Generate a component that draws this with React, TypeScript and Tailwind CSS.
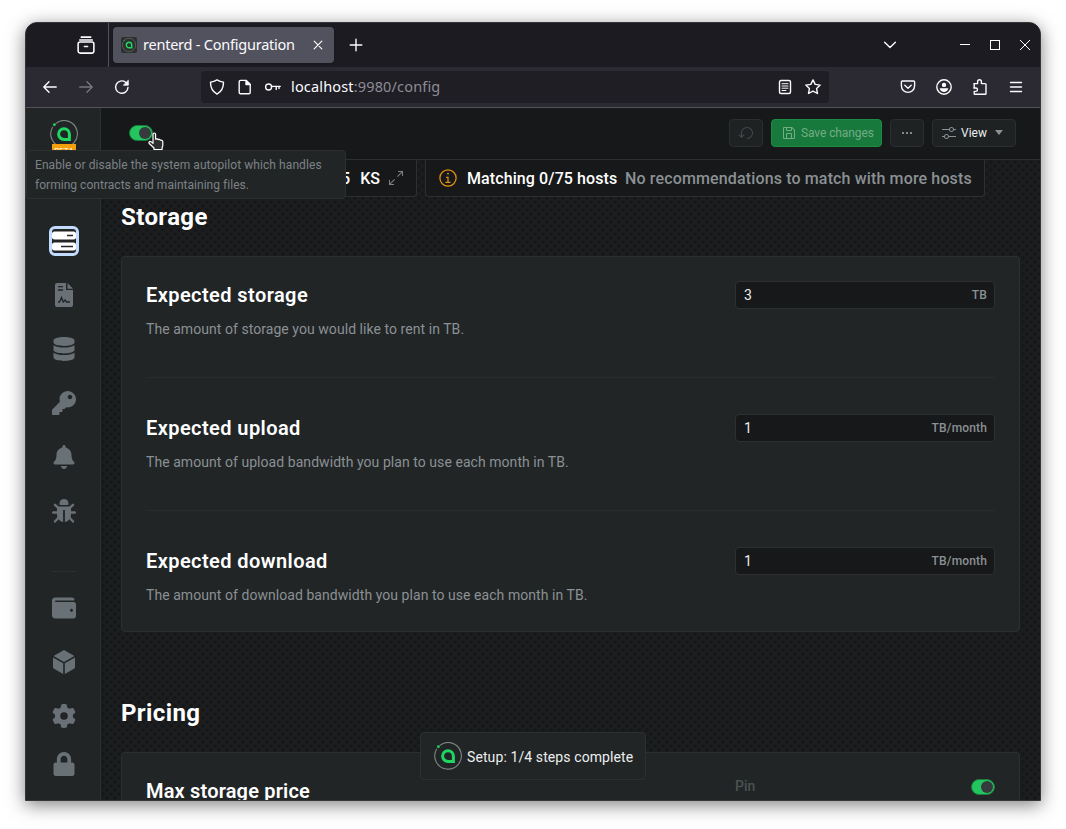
import React from "react";
import {
  FaDatabase,
  FaKey,
  FaBell,
  FaWallet,
  FaLock,
} from "react-icons/fa";
import { FaGear } from "react-icons/fa6";

const uiFont = "font-['Noto_Sans',sans-serif]";
const appFont = "font-[Roboto,sans-serif]";

function Logo({ className }: { className: string }) {
  return (
    <svg viewBox="0 0 28 28" className={className} fill="none">
      <path d="M5.6 3.6A13.3 13.3 0 1 1 2.8 6.8" stroke="#7c8580" strokeWidth="1.1" />
      <circle cx="4.4" cy="4.7" r="1.4" fill="#1ed660" />
      <path d="M14 8.7a5.4 5.4 0 1 0 0 10.8h5.4v-5.4A5.4 5.4 0 0 0 14 8.7Z" stroke="#1ed660" strokeWidth="3" />
    </svg>
  );
}

function Carbon({ d, className }: { d: string; className: string }) {
  return (
    <svg viewBox="0 0 32 32" className={className} fill="currentColor">
      <path d={d} />
    </svg>
  );
}

const SAVE =
  "M27.71,9.29l-5-5A1,1,0,0,0,22,4H6A2,2,0,0,0,4,6V26a2,2,0,0,0,2,2H26a2,2,0,0,0,2-2V10A1,1,0,0,0,27.71,9.29ZM12,6h8v4H12Zm8,20H12V18h8Zm2,0V18a2,2,0,0,0-2-2H12a2,2,0,0,0-2,2v8H6V6h4v4a2,2,0,0,0,2,2h8a2,2,0,0,0,2-2V6.41l4,4V26Z";
const RESET =
  "M18,28A12,12,0,1,0,6,16v6.2L2.4,18.6,1,20l6,6,6-6-1.4-1.4L8,22.2V16H8A10,10,0,1,1,18,26Z";
const ADJUST =
  "M30,8h-4.1c-0.5-2.3-2.5-4-4.9-4s-4.4,1.7-4.9,4H2v2h14.1c0.5,2.3,2.5,4,4.9,4s4.4-1.7,4.9-4H30V8z M21,12c-1.7,0-3-1.3-3-3s1.3-3,3-3s3,1.3,3,3S22.7,12,21,12z M2,24h4.1c0.5,2.3,2.5,4,4.9,4s4.4-1.7,4.9-4H30v-2H15.9c-0.5-2.3-2.5-4-4.9-4s-4.4,1.7-4.9,4H2V24z M11,20c1.7,0,3,1.3,3,3s-1.3,3-3,3s-3-1.3-3-3S9.3,20,11,20z";
const MAXIMIZE =
  "M20 2V4H26.586L18 12.582 19.414 14 28 5.414V12H30V2ZM14 19.416 12.592 18 4 26.586V20H2V30H12V28H5.414Z";
const INFO =
  "M17,22V14H13v2h2v6H12v2h8V22ZM16,7.5A1.5,1.5,0,1,0,17.5,9,1.5,1.5,0,0,0,16,7.5ZM16,30A14,14,0,1,1,30,16,14,14,0,0,1,16,30ZM16,4A12,12,0,1,0,28,16,12,12,0,0,0,16,4Z";

function Line({ children, className = "size-4" }: { children: React.ReactNode; className?: string }) {
  return (
    <svg
      viewBox="0 0 16 16"
      className={className}
      fill="none"
      stroke="currentColor"
      strokeWidth="1.4"
      strokeLinecap="round"
      strokeLinejoin="round"
    >
      {children}
    </svg>
  );
}

function TitleBar() {
  return (
    <div className="flex h-[44px] shrink-0 items-center bg-[#1c1b22] text-[#fbfbfe]">
      <div className="flex h-full w-[83px] items-center justify-end border-r border-[#52525e] pr-[13px]">
        <Line className="size-[18px]">
          <path d="M3.8 1h8.4M2.4 3.6h11.2" />
          <rect x="1" y="5.4" width="14" height="9.8" rx="1.8" />
          <path d="M6.6 9.4h2.8" />
        </Line>
      </div>
      <div className="ml-1 flex h-9 w-[221px] items-center rounded bg-[#52525e] pl-2 shadow-sm">
        <span className="flex size-4 items-center justify-center rounded-[2px] bg-[#2c302f]">
          <Logo className="size-[14px]" />
        </span>
        <span className="ml-[6px] w-[156px] whitespace-nowrap text-[14.5px] tracking-[-0.23px]">
          renterd - Configuration
        </span>
        <Line className="ml-[11px] size-4">
          <path d="M4.2 4.2l7.6 7.6M11.8 4.2l-7.6 7.6" strokeWidth="1.2" />
        </Line>
      </div>
      <Line className="ml-[14px] size-4">
        <path d="M8 2.2v11.6M2.2 8h11.6" />
      </Line>
      <div className="ml-auto flex items-center pr-[7px]">
        <Line className="mr-[59px] size-4">
          <path d="M2.6 5.2L8 10.4l5.4-5.2" />
        </Line>
        <svg viewBox="0 0 16 16" className="size-4" fill="none" stroke="#fff" shapeRendering="crispEdges">
          <path d="M3 7.5h10" />
        </svg>
        <svg viewBox="0 0 16 16" className="ml-[14px] size-4" fill="none" stroke="#fff" shapeRendering="crispEdges">
          <rect x="3.5" y="3.5" width="9" height="9" />
        </svg>
        <svg viewBox="0 0 16 16" className="ml-[14px] size-4" fill="none" stroke="#fff">
          <path d="M3 3l10 10M13 3L3 13" />
        </svg>
      </div>
    </div>
  );
}

function NavBar() {
  return (
    <div className="flex h-[41px] shrink-0 items-center border-b border-[#52525e] bg-[#2b2a33] pl-4 text-[#fbfbfe]">
      <Line>
        <path d="M14.2 8H2M7 2.8L1.8 8 7 13.2" />
      </Line>
      <Line className="ml-5 size-4 text-[#77767e]">
        <path d="M1.8 8H14M9 2.8L14.2 8 9 13.2" />
      </Line>
      <Line className="ml-5 size-4">
        <path d="M14 8.4A6.2 6.2 0 1 1 11.6 3.2L13.6 5" />
        <path d="M14.3 1.6v4.6H9.7z" fill="currentColor" strokeWidth=".8" />
      </Line>
      <div className="ml-[71px] flex h-8 w-[628px] items-center rounded bg-[#1f1e25] pl-2 pr-2">
        <Line>
          <path d="M8 .9c2 1.2 4 1.9 6.5 2.2C14.6 9 12 13 8 15.2 4 13 1.4 9 1.5 3.1 4 2.8 6 2.1 8 .9z" />
        </Line>
        <Line className="ml-3 size-4">
          <path d="M3.6 1.4h5.6l4 4v8a1.4 1.4 0 0 1-1.4 1.4H3.6a1.4 1.4 0 0 1-1.4-1.4V2.8a1.4 1.4 0 0 1 1.4-1.4z" />
          <path d="M9 1.4v4.2h4.2z" fill="currentColor" />
        </Line>
        <Line className="ml-3 size-4">
          <circle cx="3.6" cy="8" r="3" />
          <path d="M6.8 7.4h8.4M11.2 7.6v2.8M14 7.6v2" />
        </Line>
        <span className="ml-[10px] whitespace-nowrap text-[14.5px] tracking-[0.16px]">
          localhost<span className="text-[#8d8c94]">:9980/config</span>
        </span>
        <Line className="ml-auto size-4">
          <rect x="2.5" y="1.5" width="11" height="13" rx="1.5" />
          <path d="M5 4.7h6M5 7h6M5 9.2h6M5 11.5h4" strokeWidth="1" />
        </Line>
        <Line className="ml-3 size-4">
          <path d="M8 .9l2.2 4.5 5 .7-3.6 3.5.9 4.900L8 12.200l-4.500 2.300.9-4.900L.8 6.100l5-.7z" />
        </Line>
      </div>
      <div className="ml-auto flex items-center gap-5 pr-4">
        <Line>
          <path d="M2.4 2h11.2a1 1 0 0 1 1 1v3.8a6.6 6.6 0 0 1-13.2 0V3a1 1 0 0 1 1-1z" />
          <path d="M4.8 6.2L8 9.2l3.2-3" />
        </Line>
        <Line>
          <circle cx="8" cy="8" r="7.2" />
          <circle cx="8" cy="5.9" r="2.200" fill="currentColor" stroke="none" />
          <path d="M3.700 9.200h8.600c-.5 2.500-2.200 3.800-4.300 3.800s-3.800-1.300-4.300-3.800z" fill="currentColor" stroke="none" />
        </Line>
        <Line>
          <path d="M2.2 4.600h3.400V2.600a1.900 1.900 0 0 1 3.800 0v2h3.800a.8.8 0 0 1 .8.8v9a.8.8 0 0 1-.8.8H3a.8.8 0 0 1-.8-.8v-2h1.600a1.700 1.700 0 0 0 0-3.400H2" />
          <path d="M2.200 4.600v4.400" />
        </Line>
        <Line>
          <path d="M2.500 3.500h11M2.500 8h11M2.500 12.500h11" />
        </Line>
      </div>
    </div>
  );
}

function BarsIcon() {
  return (
    <svg viewBox="0 0 24 24" className="h-6 w-6">
      <rect x="0" y="2.500" width="24" height="8" rx="2.500" fill="#fff" />
      <rect x="0" y="13.500" width="24" height="8" rx="2.500" fill="#fff" />
      <path d="M15 6.500h6M9 17.500h12" stroke="#212526" strokeWidth="1.500" />
    </svg>
  );
}

function ContractIcon() {
  return (
    <svg viewBox="0 0 18 24" className="h-6 w-[18px]">
      <path d="M2 0h9v7h7v15a2 2 0 0 1-2 2H2a2 2 0 0 1-2-2V2a2 2 0 0 1 2-2zM12.500 0L18 5.800h-5.500z" fill="currentColor" />
      <path d="M3 3.700h5M3 7h5" stroke="#212526" strokeWidth="1.300" />
      <path d="M3 19h1.500l2-4.500 1.700 4.500 1.800-2 1.500 2H15" stroke="#212526" strokeWidth="1.300" fill="none" />
    </svg>
  );
}

function BugIcon() {
  return (
    <svg viewBox="0 0 24 24" className="size-6">
      <path d="M12 0a4.500 4.500 0 0 1 4.500 4.500v.7a.8.8 0 0 1-.8.8H8.300a.8.8 0 0 1-.8-.8v-.7A4.500 4.500 0 0 1 12 0z" fill="currentColor" />
      <path
        d="M3 5.800l3.500 3.400M21 5.800l-3.500 3.400M1.200 13.500H6M22.800 13.500H18M3 22.500l3.700-4M21 22.500l-3.700-4"
        stroke="currentColor"
        strokeWidth="2.400"
        strokeLinecap="round"
      />
      <path d="M6.500 7.500h11A1.500 1.500 0 0 1 19 9v6.500c0 4-2.800 7-6.100 7.400V11h-1.800v11.900C7.800 22.500 5 19.500 5 15.500V9a1.500 1.500 0 0 1 1.500-1.500z" fill="currentColor" />
    </svg>
  );
}

function CubeIcon() {
  return (
    <svg viewBox="0 0 24 24" className="size-6" fill="currentColor">
      <path d="M12 0l10.400 5.900L12 11.900 1.600 5.900z" />
      <path d="M1 7.500l10.200 5.800V24L2 18.800a2 2 0 0 1-1-1.700zM23 7.500l-10.200 5.800V24l9.200-5.200a2 2 0 0 0 1-1.700z" />
    </svg>
  );
}

function Sidebar() {
  return (
    <div className="flex w-[75px] shrink-0 flex-col items-center border-r border-[#2d3031] bg-[#212526] pl-[2px] text-[#697177]">
      <div className="mt-3 flex h-[50px] flex-col items-center">
        <Logo className="size-7" />
        <span className="-mt-[4px] h-[14px] w-6 overflow-hidden bg-[#f59e0b] text-center text-[8px] leading-[14px] text-white">
          BETA
        </span>
      </div>
      <div className="mt-14 flex size-[30px] items-center justify-center rounded-md border-[3px] border-[#c2dcff]">
        <BarsIcon />
      </div>
      <div className="mt-[27px] flex flex-col items-center gap-[30px]">
        <ContractIcon />
        <FaDatabase className="size-6" />
        <FaKey className="size-6" />
        <FaBell className="size-6" />
        <BugIcon />
      </div>
      <div className="mt-12 h-px w-6 bg-[#2b2f30]" />
      <div className="mt-6 flex flex-col items-center gap-[30px]">
        <FaWallet className="size-6" />
        <CubeIcon />
        <FaGear className="size-6" />
      </div>
      <FaLock className="mt-6 size-6" />
    </div>
  );
}

function Toggle() {
  return (
    <span className="flex h-4 w-6 items-center justify-end rounded-full border border-[#1c7a3e] bg-[#22c55e] pr-px">
      <span className="size-3 rounded-full bg-[#363a3d]" />
    </span>
  );
}

function Header() {
  return (
    <div className="flex h-[52px] shrink-0 items-center border-b border-[#2d3031] bg-[#161819] pr-6 pb-[2px] pl-7 text-[12px]">
      <Toggle />
      <div className="ml-auto flex gap-2">
        <span className="flex h-7 w-[34px] items-center justify-center rounded border border-[#2a2e30] bg-[#1e2223] text-[#46494c]">
          <Carbon d={RESET} className="size-4" />
        </span>
        <span className="flex h-7 w-[111px] items-center gap-1 rounded border border-[#1c8c45] bg-[#18793c] pl-[9px] text-[#73ac86]">
          <Carbon d={SAVE} className="size-4" />
          <span className="whitespace-nowrap tracking-[-0.1px]">Save changes</span>
        </span>
        <span className="flex h-7 w-[34px] items-center justify-center gap-[2px] rounded border border-[#2a2e30] bg-[#1e2223]">
          <i className="size-[2px] bg-[#85898c]" />
          <i className="size-[2px] bg-[#85898c]" />
          <i className="size-[2px] bg-[#85898c]" />
        </span>
        <span className="flex h-7 w-[84px] items-center rounded border border-[#2a2e30] bg-[#1e2223] pl-2 text-[#edeeee]">
          <Carbon d={ADJUST} className="size-4 text-[#8b9094]" />
          <span className="ml-1 w-[26px]">View</span>
          <svg viewBox="0 0 8 5" className="ml-2 h-[5px] w-2">
            <path d="M0 0h8L4 5z" fill="#8b9094" />
          </svg>
        </span>
      </div>
    </div>
  );
}

function InfoBar() {
  return (
    <div className="flex h-[37px] shrink-0 gap-2 text-[16px] font-medium text-white">
      <div className="flex w-[296px] items-center justify-end rounded-b border border-t-0 border-[#2d3031] bg-[#161819] pr-3">
        <span className="pt-px">5</span>
        <span className="ml-[10px] pt-px">KS</span>
        <Carbon d={MAXIMIZE} className="ml-2 size-4 text-[#7d8286]" />
      </div>
      <div className="flex w-[560px] items-center whitespace-nowrap rounded-b border border-t-0 border-[#2d3031] bg-[#161819] pl-3">
        <Carbon d={INFO} className="size-5 text-[#e5930e]" />
        <span className="ml-[9px] w-[150px] pt-px tracking-[0.1px]">Matching 0/75 hosts</span>
        <span className="ml-2 pt-px tracking-[0.14px] text-[#8b9094]">
          No recommendations to match with more hosts
        </span>
      </div>
    </div>
  );
}

const fields = [
  { title: "Expected storage", text: "The amount of storage you would like to rent in TB.", value: "3", unit: "TB" },
  { title: "Expected upload", text: "The amount of upload bandwidth you plan to use each month in TB.", value: "1", unit: "TB/month" },
  { title: "Expected download", text: "The amount of download bandwidth you plan to use each month in TB.", value: "1", unit: "TB/month" },
];

function Settings() {
  return (
    <div className="flex flex-col pr-5">
      <h2 className="mt-1 text-[24px] leading-8 font-bold tracking-[0.4px] text-white">Storage</h2>
      <div className="mt-[23px] h-[376px] rounded border border-[#2d3031] bg-[#212526] px-6">
        {fields.map((f, i) => (
          <div key={f.title} className="flex h-[133px] flex-col last:h-[108px]">
            <div className="flex justify-between">
              <h3 className="mt-6 text-[20px] leading-7 font-semibold tracking-[0.42px] text-white">{f.title}</h3>
              <div className="mt-6 flex h-7 w-[260px] items-center justify-between rounded border border-[#2d3031] bg-[#161819] pr-[7px] pl-2">
                <span className="text-[14px] text-[#edeeee]">{f.value}</span>
                <span className="text-[12px] font-medium tracking-[0.15px] text-[#8b9094]">{f.unit}</span>
              </div>
            </div>
            <p className="mt-[10px] text-[14px] leading-5 tracking-[0.055px] text-[#8b9094]">{f.text}</p>
            {i < 2 && <div className="mt-[38px] h-px shrink-0 bg-[#282c2d]" />}
          </div>
        ))}
      </div>
      <h2 className="mt-[65px] text-[24px] leading-8 font-bold tracking-[0.4px] text-white">Pricing</h2>
      <div className="mt-[23px] flex h-[90px] items-start justify-between rounded border border-[#2d3031] bg-[#212526] px-6">
        <h3 className="mt-6 text-[20px] leading-7 font-semibold tracking-[0.18px] text-white">Max storage price</h3>
        <div className="mt-[23px] flex w-[260px] items-center justify-between">
          <span className="text-[14px] font-medium text-[#4b5054]">Pin</span>
          <Toggle />
        </div>
      </div>
    </div>
  );
}

export default function App() {
  return (
    <div className="h-[829px] w-[1066px] overflow-hidden bg-white pt-[22px] pl-[25px]">
      <div className={`${uiFont} relative h-[779px] w-[1016px] rounded-t-xl shadow-[0_4px_18px_rgba(0,0,0,0.5)]`}>
        <div className="flex h-full flex-col overflow-hidden rounded-t-xl border border-[#35353a] bg-[#161819]">
          <TitleBar />
          <NavBar />
          <div className={`${appFont} flex min-h-0 grow`}>
            <Sidebar />
            <div className="flex min-w-0 grow flex-col">
              <Header />
              <div className="flex min-h-0 grow flex-col overflow-hidden bg-[#1b1d1e] bg-[radial-gradient(circle_at_2px_2px,#151718_1.2px,transparent_2.4px),radial-gradient(circle_at_6px_6px,#151718_1.2px,transparent_2.4px)] bg-[size:8px_8px] pl-5">
                <InfoBar />
                <Settings />
              </div>
            </div>
          </div>
        </div>
        <div className={`${appFont} absolute top-[128px] left-[1px] h-[49px] w-[320px] rounded border border-[#2d3031] bg-[#212526] px-2 pt-1 text-[12px] leading-5 text-[#7d8286]`}>
          <p className="whitespace-nowrap tracking-[0.08px]">Enable or disable the system autopilot which handles</p>
          <p className="whitespace-nowrap tracking-[0.03px]">forming contracts and maintaining files.</p>
        </div>
        <div className={`${appFont} absolute top-[710px] left-[395px] flex h-12 w-[226px] items-center rounded border border-[#2d3031] bg-[#212526] pl-[13px] text-[14px] text-[#edeeee]`}>
          <Logo className="size-7" />
          <span className="ml-[5px] pt-[2px] whitespace-nowrap tracking-[0.1px]">Setup: 1/4 steps complete</span>
        </div>
        <svg viewBox="0 0 18 19" className="absolute top-[110px] left-[122px] h-[19px] w-[18px]">
          <path
            d="M6 2.200c0-1.600 2.600-1.600 2.600 0v5c.8-.7 2.100-.4 2.500.4.8-.5 1.900-.2 2.300.6 1.300-.3 2.400.3 2.400 1.800v3.500c0 1-.7 1.500-.7 2.300v1.700H7v-1.500L2.200 11.500c-1-1.500.7-2.700 2-1.600L6 11.400z"
            fill="#2e2e2e"
            stroke="#fff"
            strokeWidth="1.200"
            strokeLinejoin="round"
          />
        </svg>
      </div>
    </div>
  );
}
